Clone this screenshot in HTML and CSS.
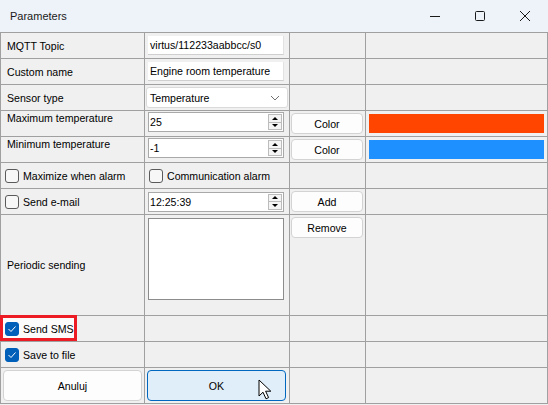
FILE: index.html
```html
<!DOCTYPE html>
<html>
<head>
<meta charset="utf-8">
<link rel="stylesheet" href="styles.css">
</head>
<body>
<div class="window">
  <div class="titlebar">
    <span class="title">Parameters</span>
    <div class="controls">
      <div class="ctl"><svg width="12" height="12" viewBox="0 0 12 12"><path d="M1 6.5h10" stroke="#1a1a1a" stroke-width="1"/></svg></div>
      <div class="ctl"><svg width="12" height="12" viewBox="0 0 12 12"><rect x="1.5" y="1.5" width="9" height="9" rx="1" fill="none" stroke="#1a1a1a" stroke-width="1"/></svg></div>
      <div class="ctl"><svg width="12" height="12" viewBox="0 0 12 12"><path d="M1 1L11 11M11 1L1 11" stroke="#1a1a1a" stroke-width="1"/></svg></div>
    </div>
  </div>
  <div class="grid">
    <!-- row 1 -->
    <div class="cell label">MQTT Topic</div>
    <div class="cell"><div class="field">virtus/112233aabbcc/s0</div></div>
    <div class="cell"></div>
    <div class="cell"></div>
    <!-- row 2 -->
    <div class="cell label">Custom name</div>
    <div class="cell"><div class="field">Engine room temperature</div></div>
    <div class="cell"></div>
    <div class="cell"></div>
    <!-- row 3 -->
    <div class="cell label">Sensor type</div>
    <div class="cell"><div class="select"><span>Temperature</span><svg width="10" height="6" viewBox="0 0 10 6"><path d="M1 1L5 5L9 1" fill="none" stroke="#707070" stroke-width="1"/></svg></div></div>
    <div class="cell"></div>
    <div class="cell"></div>
    <!-- row 4 -->
    <div class="cell label top">Maximum temperature</div>
    <div class="cell top"><div class="spin"><span>25</span><div class="spinbtns"><div class="sb"><span class="up"></span></div><div class="sb"><span class="down"></span></div></div></div></div>
    <div class="cell top"><div class="btn">Color</div></div>
    <div class="cell top"><div class="swatch orange"></div></div>
    <!-- row 5 -->
    <div class="cell label top">Minimum temperature</div>
    <div class="cell top"><div class="spin"><span>-1</span><div class="spinbtns"><div class="sb"><span class="up"></span></div><div class="sb"><span class="down"></span></div></div></div></div>
    <div class="cell top"><div class="btn">Color</div></div>
    <div class="cell top"><div class="swatch blue"></div></div>
    <!-- row 6 -->
    <div class="cell"><span class="cb"></span><span class="txt">Maximize when alarm</span></div>
    <div class="cell"><span class="cb"></span><span class="txt">Communication alarm</span></div>
    <div class="cell"></div>
    <div class="cell"></div>
    <!-- row 7 -->
    <div class="cell"><span class="cb"></span><span class="txt">Send e-mail</span></div>
    <div class="cell"><div class="spin"><span>12:25:39</span><div class="spinbtns"><div class="sb"><span class="up"></span></div><div class="sb"><span class="down"></span></div></div></div></div>
    <div class="cell"><div class="btn">Add</div></div>
    <div class="cell"></div>
    <!-- row 8 -->
    <div class="cell label">Periodic sending</div>
    <div class="cell top"><div class="listbox"></div></div>
    <div class="cell top"><div class="btn btn-remove">Remove</div></div>
    <div class="cell"></div>
    <!-- row 9 -->
    <div class="cell sms"><span class="highlight"></span><span class="cb checked"><svg width="10" height="8" viewBox="0 0 10 8"><path d="M1.5 4L4 6.5L8.5 1.5" fill="none" stroke="#fff" stroke-width="1"/></svg></span><span class="txt">Send SMS</span></div>
    <div class="cell"></div>
    <div class="cell"></div>
    <div class="cell"></div>
    <!-- row 10 -->
    <div class="cell"><span class="cb checked"><svg width="10" height="8" viewBox="0 0 10 8"><path d="M1.5 4L4 6.5L8.5 1.5" fill="none" stroke="#fff" stroke-width="1"/></svg></span><span class="txt">Save to file</span></div>
    <div class="cell"></div>
    <div class="cell"></div>
    <div class="cell"></div>
    <!-- row 11 -->
    <div class="cell"><div class="bigbtn">Anuluj</div></div>
    <div class="cell"><div class="bigbtn ok">OK</div>
      <svg class="cursor" width="14" height="21" viewBox="0 0 14 21"><path d="M1 1L1 17L5 13.2L8 19.8L10.6 18.6L7.6 12.2L12.8 12.2Z" fill="#fff" stroke="#000" stroke-width="1" stroke-linejoin="round"/></svg>
    </div>
    <div class="cell"></div>
    <div class="cell"></div>
  </div>
</div>
</body>
</html>
```

FILE: styles.css
```css
html, body {
  margin: 0;
  padding: 0;
}
body {
  width: 548px;
  height: 405px;
  overflow: hidden;
  background: #f0f0f0;
  font-family: "Liberation Sans", Arial, sans-serif;
  font-size: 10.6px;
  color: #000;
}
.window {
  width: 548px;
  height: 405px;
  background: #f0f0f0;
}
.titlebar {
  height: 32px;
  background: #eef2f9;
  display: flex;
  align-items: center;
  justify-content: space-between;
}
.title {
  padding-left: 10px;
  font-size: 11px;
  color: #1a1a1a;
}
.controls {
  display: flex;
  height: 32px;
  padding-right: 1px;
}
.ctl {
  width: 45px;
  height: 32px;
  display: flex;
  align-items: center;
  justify-content: center;
}
.grid {
  display: grid;
  grid-template-columns: 143px 144px 75px 181px;
  grid-template-rows: repeat(7, 25px) 100px 25px 25px 35px;
  gap: 1px;
  padding: 1px;
  background: #a0a0a0;
  width: 548px;
  box-sizing: border-box;
}
.cell {
  background: #f0f0f0;
  position: relative;
  display: flex;
  align-items: center;
  white-space: nowrap;
}
.cell.top {
  align-items: flex-start;
}
.label {
  padding-left: 6px;
}
.label.top {
  padding-top: 1px;
  line-height: 13px;
}
.txt {
  position: relative;
  z-index: 1;
}
.field {
  margin-left: 3px;
  width: 136px;
  height: 19px;
  background: #fff;
  border-bottom: 1px solid #cfcfcf;
  border-right: 1px solid #e2e2e2;
  box-sizing: border-box;
  padding-left: 2px;
  display: flex;
  align-items: center;
}
.select {
  margin-left: 1px;
  width: 142px;
  height: 21px;
  box-sizing: border-box;
  border: 1px solid #dadada;
  border-radius: 3px;
  background: #fff;
  padding: 0 7px 0 3px;
  display: flex;
  justify-content: space-between;
  align-items: center;
}
.spin {
  margin-left: 3px;
  margin-top: 1px;
  width: 136px;
  height: 20px;
  box-sizing: border-box;
  border: 1px solid #a9a9a9;
  background: #fff;
  display: flex;
  align-items: center;
  padding-left: 1px;
}
.cell:not(.top) > .spin {
  margin-top: 0;
}
.spinbtns {
  margin-left: auto;
  margin-right: 1px;
  width: 14px;
  height: 16px;
  display: flex;
  flex-direction: column;
  box-sizing: border-box;
  border: 1px solid #bcbcbc;
  background: #f4f4f4;
}
.sb {
  flex: 1;
  display: flex;
  align-items: center;
  justify-content: center;
}
.sb + .sb {
  border-top: 1px solid #bcbcbc;
}
.up {
  width: 0;
  height: 0;
  border-left: 3px solid transparent;
  border-right: 3px solid transparent;
  border-bottom: 3px solid #000;
}
.down {
  width: 0;
  height: 0;
  border-left: 3px solid transparent;
  border-right: 3px solid transparent;
  border-top: 3px solid #000;
}
.btn {
  margin-left: 1px;
  margin-top: 2px;
  width: 72px;
  height: 21px;
  box-sizing: border-box;
  border: 1px solid #d3d3d3;
  border-radius: 4px;
  background: #fdfdfd;
  display: flex;
  align-items: center;
  justify-content: center;
}
.cell:not(.top) > .btn {
  margin-top: 0;
}
.swatch {
  margin-left: 3px;
  margin-top: 3px;
  width: 175px;
  height: 19px;
}
.orange {
  background: #ff4500;
}
.blue {
  background: #1e90ff;
}
.cb {
  width: 14px;
  height: 14px;
  box-sizing: border-box;
  border: 1px solid #5a5a5a;
  border-radius: 3px;
  background: #f7f7f7;
  margin-left: 4px;
  margin-right: 4px;
  display: flex;
  align-items: center;
  justify-content: center;
  position: relative;
  z-index: 1;
}
.cb.checked {
  background: #005fb8;
  border-color: #005fb8;
}
.listbox {
  margin-left: 3px;
  margin-top: 3px;
  width: 136px;
  height: 82px;
  box-sizing: border-box;
  border: 1px solid #8c8c8c;
  background: #fff;
}
.btn-remove {
  margin-top: 2px;
}
.highlight {
  position: absolute;
  left: -1px;
  top: -1px;
  width: 77px;
  height: 26px;
  box-sizing: border-box;
  border: 3px solid #ed1c24;
  background: #fbfbfb;
  z-index: 0;
}
.bigbtn {
  margin-left: 2px;
  width: 139px;
  height: 31px;
  box-sizing: border-box;
  border: 1px solid #d3d3d3;
  border-radius: 4px;
  background: #fdfdfd;
  display: flex;
  align-items: center;
  justify-content: center;
}
.bigbtn.ok {
  background: #e0eef9;
  border: 1px solid #0067c0;
}
.cursor {
  position: absolute;
  left: 113px;
  top: 11px;
}
```
